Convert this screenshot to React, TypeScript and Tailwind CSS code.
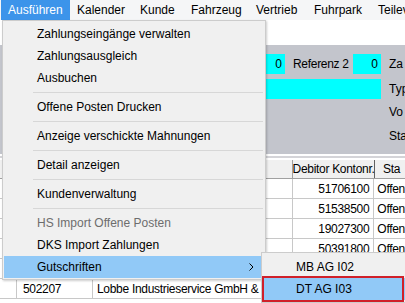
import { ReactNode } from 'react'

const menuBar = [
  { label: 'Ausführen', w: 'w-[69px]' },
  { label: 'Kalender', w: 'w-[63px]' },
  { label: 'Kunde', w: 'w-[51px]' },
  { label: 'Fahrzeug', w: 'w-[65px]' },
  { label: 'Vertrieb', w: 'w-[58px]' },
  { label: 'Fuhrpark', w: 'w-[64px]' },
  { label: 'Teileverkauf', w: 'w-[90px]' },
]

type MenuEntry =
  | { kind: 'item'; label: string; disabled?: boolean; active?: boolean; sub?: boolean }
  | { kind: 'sep' }

const entries: MenuEntry[] = [
  { kind: 'item', label: 'Zahlungseingänge verwalten' },
  { kind: 'item', label: 'Zahlungsausgleich' },
  { kind: 'item', label: 'Ausbuchen' },
  { kind: 'sep' },
  { kind: 'item', label: 'Offene Posten Drucken' },
  { kind: 'sep' },
  { kind: 'item', label: 'Anzeige verschickte Mahnungen' },
  { kind: 'sep' },
  { kind: 'item', label: 'Detail anzeigen' },
  { kind: 'sep' },
  { kind: 'item', label: 'Kundenverwaltung' },
  { kind: 'sep' },
  { kind: 'item', label: 'HS Import Offene Posten', disabled: true },
  { kind: 'item', label: 'DKS Import Zahlungen' },
  { kind: 'item', label: 'Gutschriften', active: true, sub: true },
]

const rows = [
  { nr: '', name: '', konto: '51706100', status: 'Offen' },
  { nr: '', name: '', konto: '51538500', status: 'Offen' },
  { nr: '', name: '', konto: '19027300', status: 'Offen' },
  { nr: '', name: '', konto: '50391800', status: 'Offen' },
  { nr: '', name: '', konto: '', status: '' },
  { nr: '502207', name: 'Lobbe Industrieservice GmbH & Co. KG', konto: '', status: '' },
]

function Cyan({ className, children }: { className: string; children?: ReactNode }) {
  return <div className={`bg-[#00ffff] flex items-center justify-end pr-[3px] ${className}`}>{children}</div>
}

export default function App() {
  return (
    <div className="relative w-[405px] h-[303px] overflow-hidden bg-white" style={{ fontFamily: '"Liberation Sans", Arial, sans-serif' }}>
      {/* menu bar */}
      <div className="h-[20px] flex bg-[#f5f6f7] text-[12px] text-black leading-[20px] pl-[1px]">
        {menuBar.map((m, i) => (
          <div
            key={m.label}
            className={`${m.w} shrink-0 pl-[7px] whitespace-nowrap ${i === 0 ? 'bg-[#3c94ea] text-white' : ''}`}
          >
            {m.label}
          </div>
        ))}
      </div>

      {/* toolbar area */}
      <div className="h-[25px] bg-white" />

      {/* form panel */}
      <div className="h-[109px] bg-[#c3c5cc] flex text-[12px] text-black">
        <div className="w-[2px] bg-[#00ffff] mt-[2px] mb-[4px]" />
        <div className="ml-[264px] pt-[9px] flex flex-col">
          <div className="flex items-center h-[20px]">
            <Cyan className="w-[21px] h-[20px]">0</Cyan>
            <div className="w-[68px] pl-[8px] tracking-[-0.3px]">Referenz 2</div>
            <Cyan className="w-[28px] h-[20px]">0</Cyan>
            <div className="pl-[8px] whitespace-nowrap">Za</div>
          </div>
          <div className="flex items-center h-[20px] mt-[5px]">
            <Cyan className="w-[117px] h-[20px]" />
            <div className="pl-[8px]">Typ</div>
          </div>
          <div className="flex items-center h-[20px] mt-[3px]">
            <div className="w-[117px]" />
            <div className="pl-[8px]">Vo</div>
          </div>
          <div className="flex items-center h-[20px] mt-[4px]">
            <div className="w-[117px]" />
            <div className="pl-[8px]">Sta</div>
          </div>
        </div>
      </div>
      <div className="h-[2px] bg-white" />
      <div className="h-[2px] bg-[#d4d4d8]" />
      <div className="h-[2px] bg-white" />

      {/* table */}
      <div className="text-[12px] tracking-[-0.3px] text-black">
        <div className="flex h-[19px] bg-[#f0f0f0] border-b border-[#a0a0a0]">
          <div className="w-[17px] border-r border-[#a0a0a0]" />
          <div className="w-[76px] border-r border-[#a0a0a0]" />
          <div className="w-[200px] border-r border-[#a0a0a0]" />
          <div className="w-[82px] border-r border-[#606060] flex items-center justify-center whitespace-nowrap">Debitor Kontonr.</div>
          <div className="flex-1 flex items-center pl-[8px] whitespace-nowrap">Sta</div>
        </div>
        {rows.map((r, i) => (
          <div key={i} className="flex h-[20px] border-b border-[#c8c8c8]">
            <div className="w-[17px] border-r border-[#c8c8c8]" />
            <div className="w-[76px] border-r border-[#c8c8c8] flex items-center pl-[6px]">{r.nr}</div>
            <div className="w-[200px] border-r border-[#c8c8c8] flex items-center pl-[4px] whitespace-nowrap overflow-hidden">{r.name}</div>
            <div className="w-[82px] border-r border-[#c8c8c8] flex items-center justify-end pr-[4px]">{r.konto}</div>
            <div className="flex-1 flex items-center pl-[3px] whitespace-nowrap">{r.status}</div>
          </div>
        ))}
      </div>

      {/* dropdown menu */}
      <div className="absolute left-[2px] top-[20px] w-[264px] bg-[#f0f0f0] border border-[#cccccc] px-[1px] pt-[2px] pb-[1px] text-[12px] text-black shadow-[1px_1px_2px_rgba(0,0,0,0.2)]">
        {entries.map((e, i) =>
          e.kind === 'sep' ? (
            <div key={i} className="h-[7px] flex items-center pl-[29px] pr-[1px]">
              <div className="h-px w-full bg-[#d7d7d7]" />
            </div>
          ) : (
            <div
              key={i}
              className={`h-[22px] flex items-center pl-[33px] pr-[10px] whitespace-nowrap ${e.active ? 'bg-[#91c9f7]' : ''} ${e.disabled ? 'text-[#6d6d6d]' : ''}`}
            >
              <span className="flex-1">{e.label}</span>
              {e.sub && (
                <svg width="5" height="8" viewBox="0 0 5 8">
                  <path d="M0.5 0.5 L4 4 L0.5 7.5" fill="none" stroke="#000" strokeWidth="1" />
                </svg>
              )}
            </div>
          )
        )}
      </div>

      {/* submenu */}
      <div className="absolute left-[261px] top-[252px] w-[146px] bg-[#f0f0f0] border border-[#cccccc] px-[1px] pt-[3px] pb-[2px] text-[12px] text-black">
        <div className="h-[22px] flex items-center pl-[33px] whitespace-nowrap">MB AG I02</div>
        <div className="relative h-[22px] flex items-center pl-[33px] bg-[#91c9f7] whitespace-nowrap">
          DT AG I03
          <div className="absolute left-[-1px] right-[1px] top-[-2px] bottom-[-2px] border-2 border-[#d0202a]" />
        </div>
      </div>
    </div>
  )
}
